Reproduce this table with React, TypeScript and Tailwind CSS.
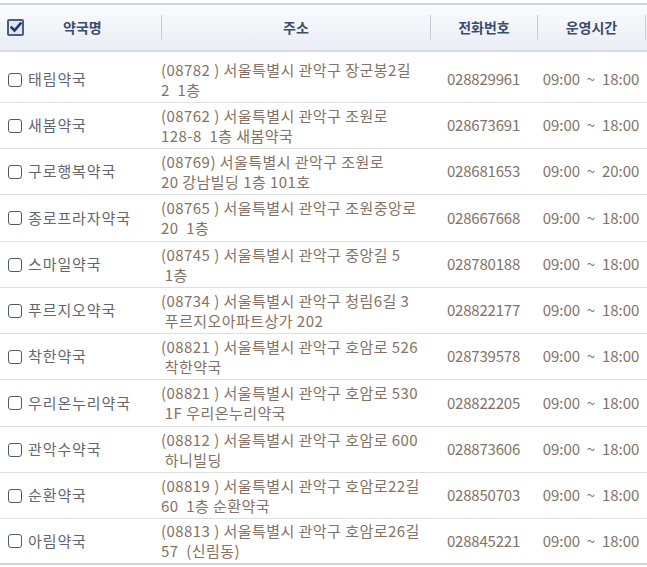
import React from "react";

type Row = {
  name: string;
  addr1: string;
  addr2: string;
  tel: string;
  time: string;
  h: string;
};

const rows: Row[] = [
  { name: "태림약국", addr1: "(08782 ) 서울특별시 관악구 장군봉2길", addr2: "2  1층", tel: "028829961", time: "09:00 ~ 18:00", h: "h-[51px] pt-[5px]" },
  { name: "새봄약국", addr1: "(08762 ) 서울특별시 관악구 조원로", addr2: "128-8  1층 새봄약국", tel: "028673691", time: "09:00 ~ 18:00", h: "h-[46px]" },
  { name: "구로행복약국", addr1: "(08769) 서울특별시 관악구 조원로", addr2: "20 강남빌딩 1층 101호", tel: "028681653", time: "09:00 ~ 20:00", h: "h-[46px]" },
  { name: "종로프라자약국", addr1: "(08765 ) 서울특별시 관악구 조원중앙로", addr2: "20  1층", tel: "028667668", time: "09:00 ~ 18:00", h: "h-[47px]" },
  { name: "스마일약국", addr1: "(08745 ) 서울특별시 관악구 중앙길 5", addr2: " 1층", tel: "028780188", time: "09:00 ~ 18:00", h: "h-[46px]" },
  { name: "푸르지오약국", addr1: "(08734 ) 서울특별시 관악구 청림6길 3", addr2: " 푸르지오아파트상가 202", tel: "028822177", time: "09:00 ~ 18:00", h: "h-[46px]" },
  { name: "착한약국", addr1: "(08821 ) 서울특별시 관악구 호암로 526", addr2: " 착한약국", tel: "028739578", time: "09:00 ~ 18:00", h: "h-[46px]" },
  { name: "우리온누리약국", addr1: "(08821 ) 서울특별시 관악구 호암로 530", addr2: " 1F 우리온누리약국", tel: "028822205", time: "09:00 ~ 18:00", h: "h-[47px]" },
  { name: "관악수약국", addr1: "(08812 ) 서울특별시 관악구 호암로 600", addr2: " 하니빌딩", tel: "028873606", time: "09:00 ~ 18:00", h: "h-[46px]" },
  { name: "순환약국", addr1: "(08819 ) 서울특별시 관악구 호암로22길", addr2: "60  1층 순환약국", tel: "028850703", time: "09:00 ~ 18:00", h: "h-[46px]" },
  { name: "아림약국", addr1: "(08813 ) 서울특별시 관악구 호암로26길", addr2: "57  (신림동)", tel: "028845221", time: "09:00 ~ 18:00", h: "h-[46px]" },
];

function HeaderCheck() {
  return (
    <div className="w-[17px] h-[17px] rounded-[2px] border-2 border-[#4a5d82] bg-[#dfe7f3] flex items-center justify-center">
      <svg width="12" height="11" viewBox="0 0 12 11">
        <path d="M1.5 5.5 L4.5 8.5 L10.5 1.5" fill="none" stroke="#24386a" strokeWidth="2.6" strokeLinecap="square" />
      </svg>
    </div>
  );
}

function Sep() {
  return <div className="w-px h-[25px] bg-[#c7ced8] shrink-0" />;
}

export default function App() {
  return (
    <div className="w-[647px] h-[567px] bg-white pt-[3px] overflow-hidden font-['Noto_Sans_CJK_KR','Noto_Sans',sans-serif] text-[15px]">
      {/* 헤더 */}
      <div className="h-[49px] border-t-2 border-b-2 border-t-[#cdd4de] border-b-[#d6dce5] bg-gradient-to-b from-[#fafbfd] to-[#e9eef5] flex items-center text-[14px] font-bold text-[#3b4c70]">
        <div className="w-[161px] flex items-center pl-[7px]">
          <HeaderCheck />
          <span className="ml-[39px]">약국명</span>
        </div>
        <Sep />
        <div className="w-[268px] text-center">주소</div>
        <Sep />
        <div className="w-[106px] text-center">전화번호</div>
        <Sep />
        <div className="w-[107px] text-center">운영시간</div>
        <Sep />
      </div>

      {/* 목록 */}
      {rows.map((r, i) => (
        <div
          key={i}
          className={`grid grid-cols-[161px_269px_107px_108px] items-center border-b ${
            i === rows.length - 1 ? "border-b-2 border-[#d4d4d4]" : "border-[#e0e0e0]"
          } ${r.h}`}
        >
          <div className="flex items-center pl-[8px] text-[#62676e]">
            <div className="w-[14px] h-[14px] rounded-[3px] border-[1.5px] border-[#555a60] bg-white shrink-0" />
            <span className="ml-[6px] whitespace-nowrap tracking-[0.9px]">{r.name}</span>
          </div>
          <div className="leading-[20px] text-[#837265] whitespace-pre tracking-[0.45px]">
            <div>{r.addr1}</div>
            <div>{r.addr2}</div>
          </div>
          <div className="text-center text-[#837265] tracking-[-0.2px]">{r.tel}</div>
          <div className="text-center text-[#837265] whitespace-pre">{r.time.replace(" ~ ", "  ~  ")}</div>
        </div>
      ))}
    </div>
  );
}
